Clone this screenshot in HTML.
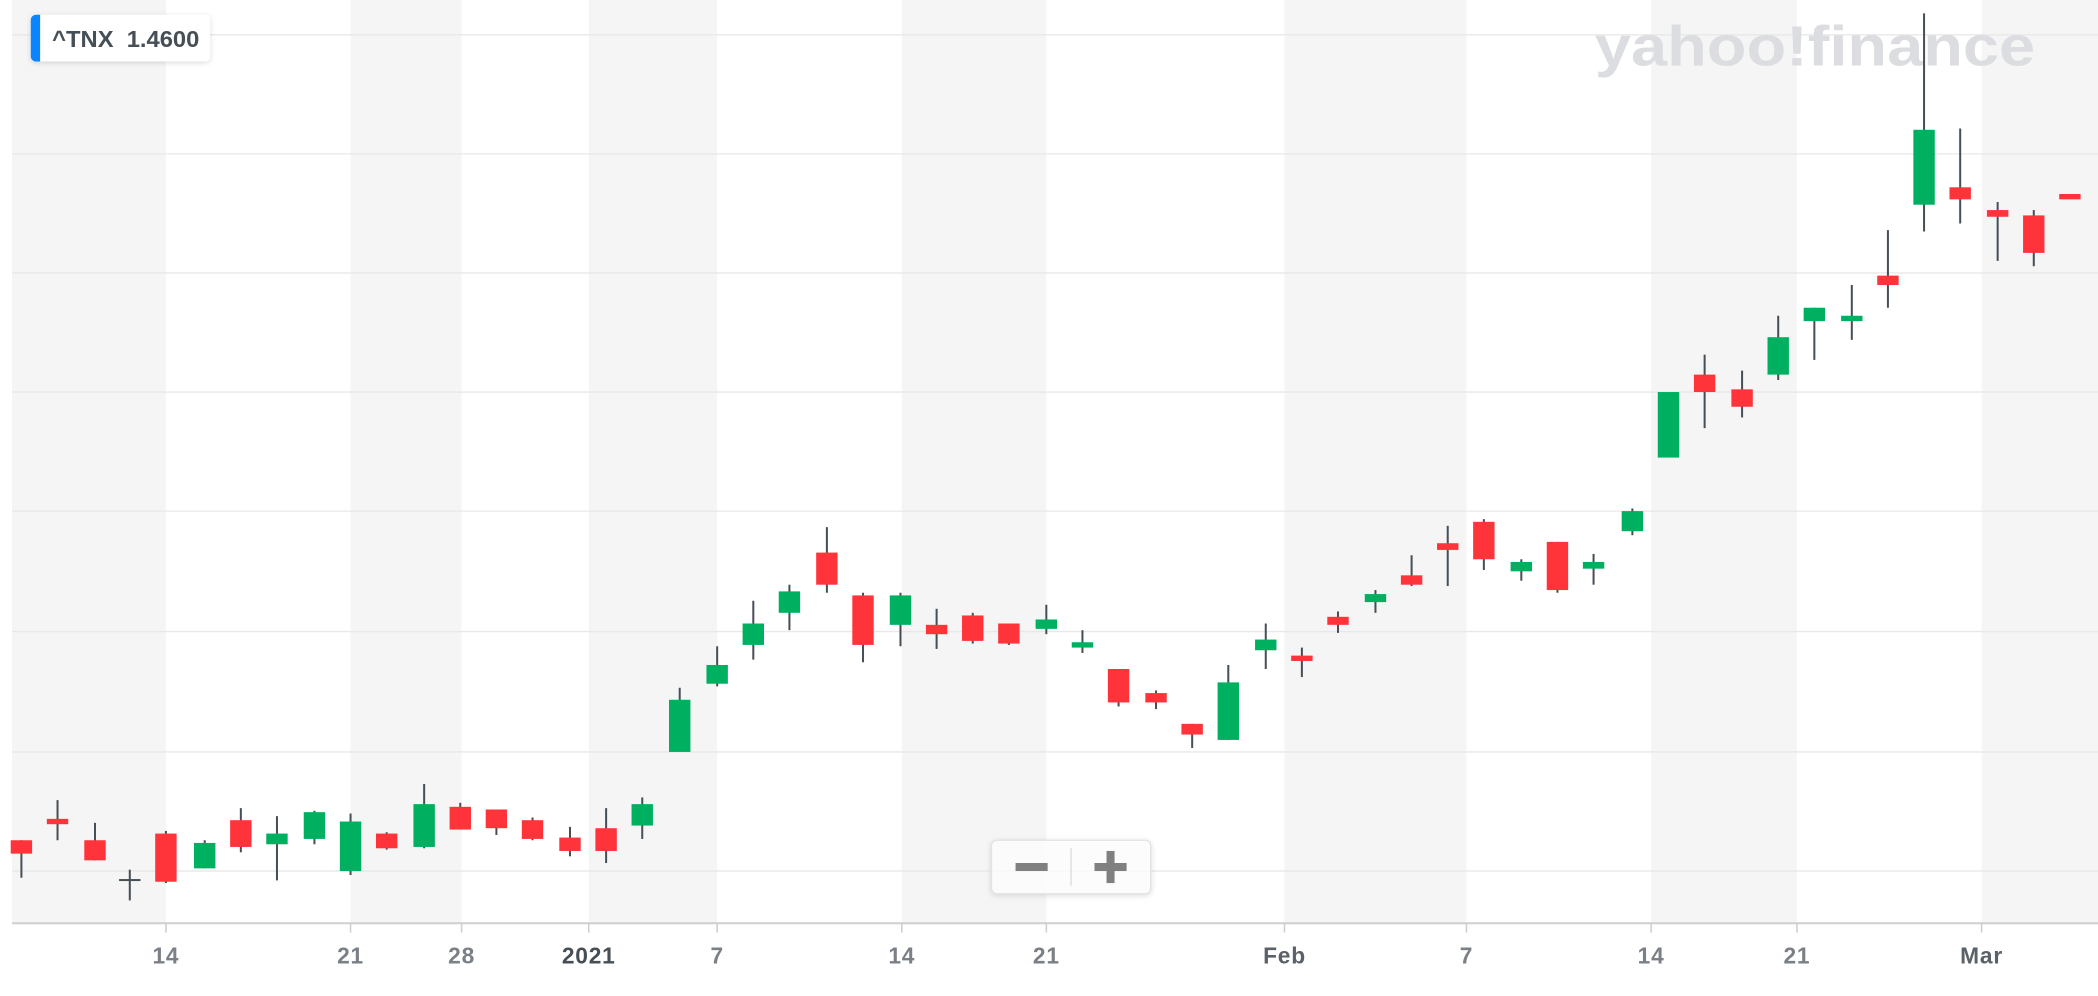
<!DOCTYPE html>
<html><head><meta charset="utf-8"><style>
html,body{margin:0;padding:0;background:#fff;width:2098px;height:996px;overflow:hidden}
svg{display:block}
.w{stroke:#464e56;stroke-width:1.5}
.r{fill:#ff333a}.g{fill:#00b061}
.ax{font-family:"Liberation Sans",sans-serif;font-size:17px;letter-spacing:0.6px;fill:#7b8086;text-anchor:middle;font-weight:600}
</style></head><body>
<svg width="2098" height="996" viewBox="0 0 1568 744.4" preserveAspectRatio="none" xmlns="http://www.w3.org/2000/svg">
<rect x="0" y="0" width="1568" height="745" fill="#fff"/>
<g fill="#f5f5f5">
<rect x="9" y="0" width="115" height="690"/>
<rect x="262" y="0" width="83" height="690"/>
<rect x="440" y="0" width="96" height="690"/>
<rect x="674" y="0" width="108" height="690"/>
<rect x="960" y="0" width="136" height="690"/>
<rect x="1234" y="0" width="109" height="690"/>
<rect x="1481" y="0" width="87" height="690"/>
</g>
<g stroke="#e8e8e8" stroke-width="1">
<line x1="9" x2="1568" y1="26" y2="26"/><line x1="9" x2="1568" y1="115" y2="115"/>
<line x1="9" x2="1568" y1="204" y2="204"/><line x1="9" x2="1568" y1="293" y2="293"/>
<line x1="9" x2="1568" y1="382" y2="382"/><line x1="9" x2="1568" y1="472" y2="472"/>
<line x1="9" x2="1568" y1="562" y2="562"/><line x1="9" x2="1568" y1="651" y2="651"/>
</g>
<text x="1192" y="49" font-family="Liberation Sans,sans-serif" font-weight="900" font-size="42" fill="#dcdde1" textLength="329" lengthAdjust="spacingAndGlyphs">yahoo!finance</text>
<g>
<line class="w" x1="16" x2="16" y1="628" y2="656"/><rect class="r" x="8" y="628" width="16" height="10"/>
<line class="w" x1="43" x2="43" y1="598" y2="628"/><rect class="r" x="35" y="612" width="16" height="4"/>
<line class="w" x1="71" x2="71" y1="615" y2="643"/><rect class="r" x="63" y="628" width="16" height="15"/>
<line class="w" x1="97" x2="97" y1="650" y2="673"/><rect fill="#464e56" x="89" y="657" width="16" height="1.5"/>
<line class="w" x1="124" x2="124" y1="621" y2="660"/><rect class="r" x="116" y="623" width="16" height="36"/>
<line class="w" x1="153" x2="153" y1="628" y2="649"/><rect class="g" x="145" y="630" width="16" height="19"/>
<line class="w" x1="180" x2="180" y1="604" y2="637"/><rect class="r" x="172" y="613" width="16" height="20"/>
<line class="w" x1="207" x2="207" y1="610" y2="658"/><rect class="g" x="199" y="623" width="16" height="8"/>
<line class="w" x1="235" x2="235" y1="606" y2="631"/><rect class="g" x="227" y="607" width="16" height="20"/>
<line class="w" x1="262" x2="262" y1="608" y2="654"/><rect class="g" x="254" y="614" width="16" height="37"/>
<line class="w" x1="289" x2="289" y1="622" y2="635"/><rect class="r" x="281" y="623" width="16" height="11"/>
<line class="w" x1="317" x2="317" y1="586" y2="634"/><rect class="g" x="309" y="601" width="16" height="32"/>
<line class="w" x1="344" x2="344" y1="600" y2="620"/><rect class="r" x="336" y="603" width="16" height="17"/>
<line class="w" x1="371" x2="371" y1="605" y2="624"/><rect class="r" x="363" y="605" width="16" height="14"/>
<line class="w" x1="398" x2="398" y1="611" y2="628"/><rect class="r" x="390" y="613" width="16" height="14"/>
<line class="w" x1="426" x2="426" y1="618" y2="640"/><rect class="r" x="418" y="626" width="16" height="10"/>
<line class="w" x1="453" x2="453" y1="604" y2="645"/><rect class="r" x="445" y="619" width="16" height="17"/>
<line class="w" x1="480" x2="480" y1="596" y2="627"/><rect class="g" x="472" y="601" width="16" height="16"/>
<line class="w" x1="508" x2="508" y1="514" y2="562"/><rect class="g" x="500" y="523" width="16" height="39"/>
<line class="w" x1="536" x2="536" y1="483" y2="513"/><rect class="g" x="528" y="497" width="16" height="14"/>
<line class="w" x1="563" x2="563" y1="449" y2="493"/><rect class="g" x="555" y="466" width="16" height="16"/>
<line class="w" x1="590" x2="590" y1="437" y2="471"/><rect class="g" x="582" y="442" width="16" height="16"/>
<line class="w" x1="618" x2="618" y1="394" y2="443"/><rect class="r" x="610" y="413" width="16" height="24"/>
<line class="w" x1="645" x2="645" y1="443" y2="495"/><rect class="r" x="637" y="445" width="16" height="37"/>
<line class="w" x1="673" x2="673" y1="443" y2="483"/><rect class="g" x="665" y="445" width="16" height="22"/>
<line class="w" x1="700" x2="700" y1="455" y2="485"/><rect class="r" x="692" y="467" width="16" height="7"/>
<line class="w" x1="727" x2="727" y1="458" y2="481"/><rect class="r" x="719" y="460" width="16" height="19"/>
<line class="w" x1="754" x2="754" y1="466" y2="482"/><rect class="r" x="746" y="466" width="16" height="15"/>
<line class="w" x1="782" x2="782" y1="452" y2="474"/><rect class="g" x="774" y="463" width="16" height="7"/>
<line class="w" x1="809" x2="809" y1="471" y2="488"/><rect class="g" x="801" y="480" width="16" height="4"/>
<line class="w" x1="836" x2="836" y1="500" y2="528"/><rect class="r" x="828" y="500" width="16" height="25"/>
<line class="w" x1="864" x2="864" y1="516" y2="530"/><rect class="r" x="856" y="518" width="16" height="7"/>
<line class="w" x1="891" x2="891" y1="541" y2="559"/><rect class="r" x="883" y="541" width="16" height="8"/>
<line class="w" x1="918" x2="918" y1="497" y2="553"/><rect class="g" x="910" y="510" width="16" height="43"/>
<line class="w" x1="946" x2="946" y1="466" y2="500"/><rect class="g" x="938" y="478" width="16" height="8"/>
<line class="w" x1="973" x2="973" y1="484" y2="506"/><rect class="r" x="965" y="490" width="16" height="4"/>
<line class="w" x1="1000" x2="1000" y1="457" y2="473"/><rect class="r" x="992" y="461" width="16" height="6"/>
<line class="w" x1="1028" x2="1028" y1="441" y2="458"/><rect class="g" x="1020" y="444" width="16" height="6"/>
<line class="w" x1="1055" x2="1055" y1="415" y2="438"/><rect class="r" x="1047" y="430" width="16" height="7"/>
<line class="w" x1="1082" x2="1082" y1="393" y2="438"/><rect class="r" x="1074" y="406" width="16" height="5"/>
<line class="w" x1="1109" x2="1109" y1="388" y2="426"/><rect class="r" x="1101" y="390" width="16" height="28"/>
<line class="w" x1="1137" x2="1137" y1="418" y2="434"/><rect class="g" x="1129" y="420" width="16" height="7"/>
<line class="w" x1="1164" x2="1164" y1="405" y2="443"/><rect class="r" x="1156" y="405" width="16" height="36"/>
<line class="w" x1="1191" x2="1191" y1="414" y2="437"/><rect class="g" x="1183" y="420" width="16" height="5"/>
<line class="w" x1="1220" x2="1220" y1="380" y2="400"/><rect class="g" x="1212" y="382" width="16" height="15"/>
<rect class="g" x="1239" y="293" width="16" height="49"/>
<line class="w" x1="1274" x2="1274" y1="265" y2="320"/><rect class="r" x="1266" y="280" width="16" height="13"/>
<line class="w" x1="1302" x2="1302" y1="277" y2="312"/><rect class="r" x="1294" y="291" width="16" height="13"/>
<line class="w" x1="1329" x2="1329" y1="236" y2="284"/><rect class="g" x="1321" y="252" width="16" height="28"/>
<line class="w" x1="1356" x2="1356" y1="230" y2="269"/><rect class="g" x="1348" y="230" width="16" height="10"/>
<line class="w" x1="1384" x2="1384" y1="213" y2="254"/><rect class="g" x="1376" y="236" width="16" height="4"/>
<line class="w" x1="1411" x2="1411" y1="172" y2="230"/><rect class="r" x="1403" y="206" width="16" height="7"/>
<line class="w" x1="1438" x2="1438" y1="10" y2="173"/><rect class="g" x="1430" y="97" width="16" height="56"/>
<line class="w" x1="1465" x2="1465" y1="96" y2="167"/><rect class="r" x="1457" y="140" width="16" height="9"/>
<line class="w" x1="1493" x2="1493" y1="151" y2="195"/><rect class="r" x="1485" y="157" width="16" height="5"/>
<line class="w" x1="1520" x2="1520" y1="157" y2="199"/><rect class="r" x="1512" y="161" width="16" height="28"/>
<rect class="r" x="1539" y="145" width="16" height="4"/>
</g>
<line x1="9" x2="1568" y1="690" y2="690" stroke="#cfcfcf" stroke-width="1.5"/>
<g stroke="#cfcfcf" stroke-width="1.2">
<line x1="124" x2="124" y1="690" y2="697"/><line x1="262" x2="262" y1="690" y2="697"/>
<line x1="345" x2="345" y1="690" y2="697"/><line x1="440" x2="440" y1="690" y2="697"/>
<line x1="536" x2="536" y1="690" y2="697"/><line x1="674" x2="674" y1="690" y2="697"/>
<line x1="782" x2="782" y1="690" y2="697"/><line x1="960" x2="960" y1="690" y2="697"/>
<line x1="1096" x2="1096" y1="690" y2="697"/><line x1="1234" x2="1234" y1="690" y2="697"/>
<line x1="1343" x2="1343" y1="690" y2="697"/><line x1="1481" x2="1481" y1="690" y2="697"/>
</g>
<text class="ax" x="124" y="720">14</text><text class="ax" x="262" y="720">21</text>
<text class="ax" x="345" y="720">28</text>
<text class="ax" x="440" y="720" style="fill:#464e56;font-weight:bold">2021</text>
<text class="ax" x="536" y="720">7</text><text class="ax" x="674" y="720">14</text>
<text class="ax" x="782" y="720">21</text>
<text class="ax" x="960" y="720" style="fill:#5b6168">Feb</text>
<text class="ax" x="1096" y="720">7</text><text class="ax" x="1234" y="720">14</text>
<text class="ax" x="1343" y="720">21</text>
<text class="ax" x="1481" y="720" style="fill:#5b6168">Mar</text>
<defs><filter id="sh" x="-20%" y="-30%" width="140%" height="160%"><feDropShadow dx="0" dy="1" stdDeviation="2" flood-color="#000" flood-opacity="0.15"/></filter></defs>
<rect x="23" y="11" width="134" height="35" rx="4" fill="#fff" filter="url(#sh)"/>
<path d="M27 11 h3 v35 h-3 a4 4 0 0 1 -4 -4 v-27 a4 4 0 0 1 4 -4z" fill="#0a84ff"/>
<text x="39" y="35" font-family="Liberation Sans,sans-serif" font-size="17" font-weight="600" fill="#464e56" textLength="110" lengthAdjust="spacingAndGlyphs">^TNX&#160; 1.4600</text>
<rect x="741" y="628" width="119" height="40" rx="4" fill="#fff" fill-opacity="0.8" stroke="#e2e2e2" filter="url(#sh)"/>
<line x1="800.5" x2="800.5" y1="634" y2="662" stroke="#dcdcdc"/>
<rect x="759" y="645" width="24" height="6" fill="#808080"/>
<rect x="818" y="645" width="24" height="6" fill="#808080"/>
<rect x="827" y="636" width="6" height="24" fill="#808080"/>
</svg>
</body></html>
